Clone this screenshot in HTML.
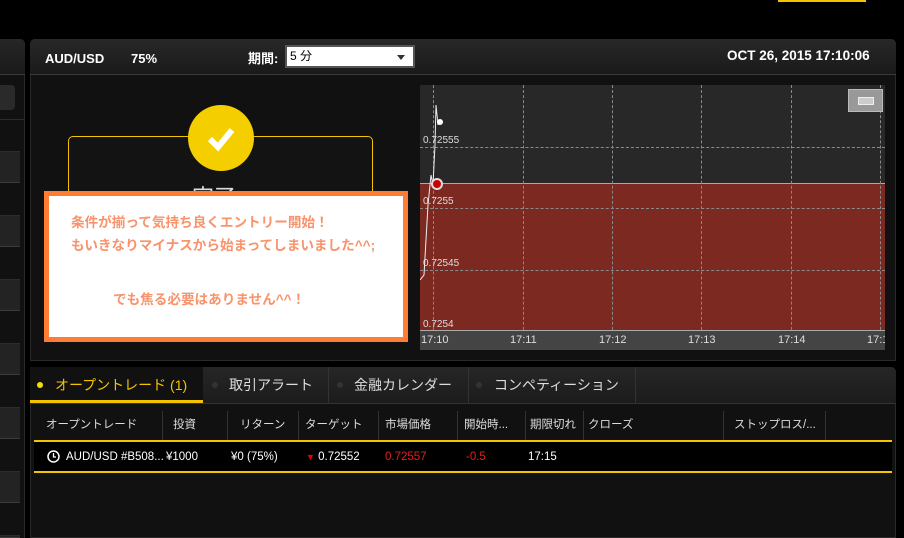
<!DOCTYPE html>
<html><head><meta charset="utf-8"><style>
*{margin:0;padding:0;box-sizing:border-box}
html,body{width:904px;height:538px;overflow:hidden}
body{background:#000;position:relative;font-family:"Liberation Sans","Noto Sans CJK JP",sans-serif;color:#fff}
.a{position:absolute;white-space:nowrap}
.row{position:absolute;left:0;width:20px;height:32px;background:#232323;border-bottom:1px solid #3c3c3c;border-top:1px solid #2c2c2c}
.vl{position:absolute;top:0;bottom:0;border-left:1px dashed #8a8a8a}
.hl{position:absolute;left:0;right:0;border-top:1px dashed #8a8a8a}
.yl{position:absolute;left:3px;font-size:10px;color:#ddd}
.xl{position:absolute;font-size:11px;color:#ddd}
.th{position:absolute;top:0;height:30px;line-height:28px;font-size:11.5px;color:#ddd;border-right:1px solid #333;padding-left:6px;white-space:nowrap;overflow:hidden}
.td{position:absolute;top:0;line-height:30px;font-size:11.5px;white-space:nowrap}
.tab{position:absolute;top:367px;height:36px;border-right:1px solid #333}
.tt{position:absolute;top:367px;line-height:36px;font-size:14px;color:#ddd;white-space:nowrap}
.dot{position:absolute;top:382px;width:6px;height:6px;border-radius:50%;background:#333}
</style></head><body>
<div class="a" style="left:778px;top:0;width:88px;height:2px;background:#f5c400"></div>
<div class="a" style="left:0;top:39px;width:25px;height:499px;background:#111;border-right:1px solid #2a2a2a;border-top-right-radius:5px"></div>
<div class="a" style="left:0;top:39px;width:25px;height:36px;background:linear-gradient(#262626,#1a1a1a);border-bottom:1px solid #3a3a3a;border-top-right-radius:5px"></div>
<div class="a" style="left:0;top:85px;width:15px;height:25px;background:#2a2a2a;border-radius:0 4px 4px 0"></div>
<div class="a" style="left:0;top:119px;width:25px;height:1px;background:#2c2c2c"></div>
<div class="row" style="top:151px"></div><div class="row" style="top:215px"></div><div class="row" style="top:279px"></div><div class="row" style="top:343px"></div><div class="row" style="top:407px"></div><div class="row" style="top:471px"></div><div class="row" style="top:535px;height:3px"></div>
<div class="a" style="left:30px;top:39px;width:866px;height:322px;background:#111;border:1px solid #2a2a2a;border-radius:5px 5px 0 0"></div>
<div class="a" style="left:30px;top:39px;width:866px;height:36px;background:linear-gradient(#282828,#1a1a1a);border-bottom:1px solid #3a3a3a;border-radius:5px 5px 0 0"></div>
<div class="a" style="left:45px;top:51px;font-size:13px;font-weight:bold">AUD/USD</div>
<div class="a" style="left:131px;top:51px;font-size:13px;font-weight:bold">75%</div>
<div class="a" style="left:248px;top:48px;font-size:13px;font-weight:bold">期間:</div>
<div class="a" style="left:285px;top:45px;width:130px;height:23px;background:#fff;border:2px solid #555;color:#000;font-size:12px;line-height:19px;padding-left:3px">5 分<span style="position:absolute;right:8px;top:8px;border:4px solid transparent;border-top:5px solid #333"></span></div>
<div class="a" style="left:727px;top:48px;font-size:13.5px;font-weight:bold">OCT 26, 2015 17:10:06</div>
<div class="a" style="left:68px;top:136px;width:305px;height:200px;background:#131313;border:1px solid #f5c400;border-radius:5px"></div>
<div class="a" style="left:188px;top:105px;width:66px;height:66px;border-radius:50%;background:#f5ce00"></div>
<svg class="a" style="left:205px;top:123px" width="32" height="30"><path d="M5 16 L13 24 L27 7" stroke="#fff" stroke-width="6" fill="none"/></svg>
<div class="a" style="left:192px;top:180px;font-size:22px;color:#ddd">完了</div>
<div class="a" style="left:420px;top:85px;width:465px;height:265px;background:#282828;overflow:hidden">
<div class="a" style="left:0;top:98px;width:465px;height:147px;background:#7c2922;border-top:1px solid #aaa"></div>
<div class="vl" style="left:13px"></div><div class="vl" style="left:103px"></div><div class="vl" style="left:192px"></div><div class="vl" style="left:281px"></div><div class="vl" style="left:371px"></div><div class="vl" style="left:460px"></div>
<div class="hl" style="top:62px"></div><div class="hl" style="top:123px"></div><div class="hl" style="top:185px"></div>
<div class="yl" style="top:50px">0.72555</div><div class="yl" style="top:111px">0.7255</div><div class="yl" style="top:173px">0.72545</div><div class="yl" style="top:234px">0.7254</div>
<svg class="a" style="left:0;top:0" width="40" height="250"><path d="M0 195 L4 190 L8 120 L11 90 L13 100 L15 60 L16 20 L18 40" stroke="#eee" stroke-width="1" fill="none"/><circle cx="20" cy="37" r="3" fill="#fff"/><circle cx="17" cy="99" r="5" fill="#c00" stroke="#ddd" stroke-width="2"/></svg>
<div class="a" style="left:0;top:245px;width:465px;height:20px;background:#444;border-top:1px solid #aaa"></div>
<div class="xl" style="left:1px;top:249px">17:10</div><div class="xl" style="left:90px;top:249px">17:11</div><div class="xl" style="left:179px;top:249px">17:12</div><div class="xl" style="left:268px;top:249px">17:13</div><div class="xl" style="left:358px;top:249px">17:14</div><div class="xl" style="left:447px;top:249px">17:15</div>
<div class="a" style="left:428px;top:4px;width:35px;height:23px;background:#999;border:1px solid #bbb"><div class="a" style="left:9px;top:7px;width:16px;height:8px;border:1px solid #eee;background:#ccc"></div></div>
</div>
<div class="a" style="left:44px;top:191px;width:364px;height:151px;background:#fff;border:5px solid #fd7d35"></div>
<div class="a" style="left:71px;top:211px;font-size:13.6px;color:#f8936b;line-height:23px;font-weight:bold">条件が揃って気持ち良くエントリー開始！<br>もいきなりマイナスから始まってしまいました^^;</div>
<div class="a" style="left:113px;top:288px;font-size:13.6px;color:#f8936b;font-weight:bold">でも焦る必要はありません^^！</div>
<div class="a" style="left:30px;top:367px;width:866px;height:171px;background:#111;border:1px solid #2a2a2a;border-radius:5px 5px 0 0"></div>
<div class="a" style="left:30px;top:367px;width:866px;height:37px;background:linear-gradient(#262626,#1c1c1c);border-bottom:1px solid #333;border-radius:5px 5px 0 0"></div>
<div class="tab" style="left:30px;width:173px;background:#111;border-bottom:3px solid #f5c400;border-right:none"></div>
<div class="tab" style="left:203px;width:126px"></div>
<div class="tab" style="left:329px;width:140px"></div>
<div class="tab" style="left:469px;width:167px"></div>
<div class="dot" style="left:37px;background:#f5e000"></div>
<div class="tt" style="left:55px;color:#f5c400">オープントレード (1)</div>
<div class="dot" style="left:212px"></div><div class="tt" style="left:229px">取引アラート</div>
<div class="dot" style="left:337px"></div><div class="tt" style="left:354px">金融カレンダー</div>
<div class="dot" style="left:476px"></div><div class="tt" style="left:494px">コンペティーション</div>
<div class="a" style="left:34px;top:411px;width:860px;height:30px">
<div class="th" style="left:0;width:129px;padding-left:12px">オープントレード</div>
<div class="th" style="left:129px;width:65px;padding-left:10px">投資</div>
<div class="th" style="left:194px;width:71px;padding-left:12px">リターン</div>
<div class="th" style="left:265px;width:80px">ターゲット</div>
<div class="th" style="left:345px;width:79px">市場価格</div>
<div class="th" style="left:424px;width:68px">開始時...</div>
<div class="th" style="left:492px;width:58px;padding-left:4px">期限切れ</div>
<div class="th" style="left:550px;width:140px;padding-left:4px">クローズ</div>
<div class="th" style="left:690px;width:102px;padding-left:10px">ストップロス/...</div>
</div>
<div class="a" style="left:34px;top:440px;width:858px;height:33px;background:#000;border-top:2px solid #f5c400;border-bottom:2px solid #f5c400">
<svg class="a" style="left:13px;top:8px" width="13" height="13"><circle cx="6.5" cy="6.5" r="5.5" stroke="#fff" stroke-width="1.5" fill="none"/><path d="M6.5 3V7H9" stroke="#fff" stroke-width="1.3" fill="none"/></svg>
<div class="td" style="left:32px">AUD/USD #B508...</div>
<div class="td" style="left:132px">¥1000</div>
<div class="td" style="left:197px">¥0 (75%)</div>
<div class="td" style="left:272px"><span style="color:#e00;font-size:9px">▼</span> 0.72552</div>
<div class="td" style="left:351px;color:#e02020">0.72557</div>
<div class="td" style="left:432px;color:#e02020">-0.5</div>
<div class="td" style="left:494px">17:15</div>
</div>
</body></html>
